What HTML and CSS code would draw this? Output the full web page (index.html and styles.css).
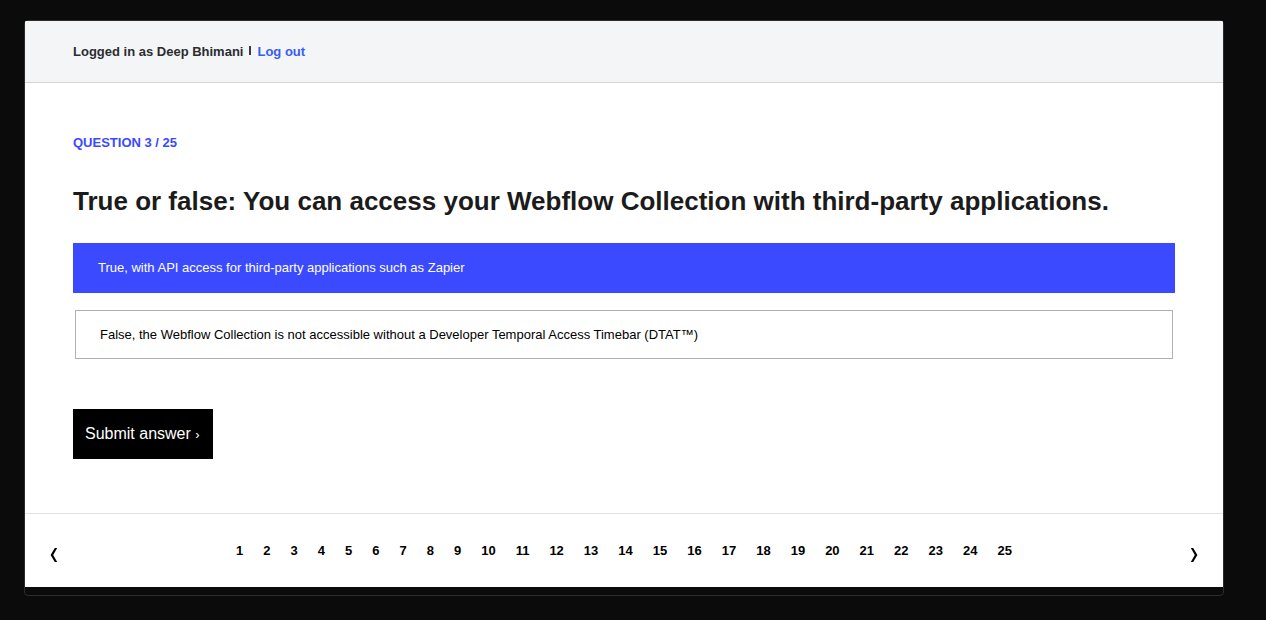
FILE: index.html
```
<!DOCTYPE html>
<html lang="en">
<head>
<meta charset="utf-8">
<meta name="viewport" content="width=device-width, initial-scale=1">
<title>Question 3 / 25</title>
<link rel="stylesheet" href="styles.css">
</head>
<body>
<div class="frame">
  <header class="account">
    <span>Logged in as Deep Bhimani</span>
    <span class="divider"></span>
    <a class="logout" href="#">Log out</a>
  </header>
  <main class="question">
    <p class="counter">QUESTION 3 / 25</p>
    <h1 class="title">True or false: You can access your Webflow Collection with third-party applications.</h1>
    <div class="answers">
      <button class="answer selected" type="button" aria-pressed="true">True, with API access for third-party applications such as Zapier</button>
      <button class="answer" type="button" aria-pressed="false">False, the Webflow Collection is not accessible without a Developer Temporal Access Timebar (DTAT™)</button>
    </div>
    <button class="submit" type="submit">Submit answer <span class="chevron">›</span></button>
  </main>
  <nav class="pager" aria-label="Questions">
    <button class="arrow" type="button" aria-label="Previous question"><svg width="8" height="14" viewBox="0 0 8 14"><path d="M4.8 0H7.2L3.2 7L7.2 14H4.8L0.6 7Z"/></svg></button>
    <div class="pages">
      <a href="#">1</a><a href="#">2</a><a href="#">3</a><a href="#">4</a><a href="#">5</a><a href="#">6</a><a href="#">7</a><a href="#">8</a><a href="#">9</a><a href="#">10</a><a href="#">11</a><a href="#">12</a><a href="#">13</a><a href="#">14</a><a href="#">15</a><a href="#">16</a><a href="#">17</a><a href="#">18</a><a href="#">19</a><a href="#">20</a><a href="#">21</a><a href="#">22</a><a href="#">23</a><a href="#">24</a><a href="#">25</a>
    </div>
    <button class="arrow" type="button" aria-label="Next question"><svg width="8" height="14" viewBox="0 0 8 14"><path d="M3.2 0H0.8L4.8 7L0.8 14H3.2L7.4 7Z"/></svg></button>
  </nav>
</div>
</body>
</html>
```
FILE: styles.css
```
* {
  box-sizing: border-box;
}

body {
  margin: 0;
  padding: 20px 42px 24px 24px;
  background: #0b0b0b;
  color: #1a1b1f;
  font-family: "Liberation Sans", Arial, sans-serif;
  font-size: 13px;
  line-height: 20px;
}

button {
  font: inherit;
  cursor: pointer;
}

a {
  color: inherit;
  text-decoration: none;
}

.frame {
  padding-bottom: 8px;
  border: 1px solid #2c2c2c;
  border-radius: 4px;
}

.account {
  display: flex;
  align-items: center;
  gap: 6px;
  padding: 21px 48px 20px;
  border-bottom: 1px solid #d5d5d5;
  border-radius: 1px 1px 0 0;
  background: #f4f5f7;
  color: #2b2c30;
  font-weight: 700;
}

.divider {
  width: 2px;
  height: 9px;
  margin-bottom: 4px;
  background: #3a3b3f;
}

.logout {
  color: #3b5bf5;
}

.question {
  padding: 50px 48px 54px;
  background: #fff;
}

.counter {
  margin: 0;
  color: #3b49ff;
  font-weight: 700;
}

.title {
  margin: 28px 0 22px;
  color: #1b1b1b;
  font-size: 26px;
  font-weight: 700;
  line-height: 40px;
}

.answers {
  display: flex;
  flex-direction: column;
  gap: 17px;
}

.answer {
  margin: 0 2px;
  padding: 14px 24px 13px;
  border: 1px solid #b0b0b0;
  background: #fff;
  color: #000;
  text-align: left;
}

.answer.selected {
  margin: 0;
  padding: 15px 25px;
  border: 0;
  background: #3b49ff;
  color: #fff;
}

.submit {
  display: block;
  min-width: 140px;
  margin-top: 50px;
  padding: 15px 12px;
  border: 0;
  background: #000;
  color: #fff;
  font-size: 16px;
  text-align: left;
}

.chevron {
  font-size: 13px;
  line-height: 1;
}

.pager {
  display: flex;
  justify-content: space-between;
  padding: 27px 25px 25px;
  border-top: 1px solid #e0e0e0;
  background: #fff;
}

.pages {
  display: flex;
  gap: 20px;
  padding-bottom: 1px;
  color: #000;
  font-weight: 700;
}

.arrow {
  display: flex;
  align-items: flex-end;
  padding: 0;
  border: 0;
  background: none;
}
```
